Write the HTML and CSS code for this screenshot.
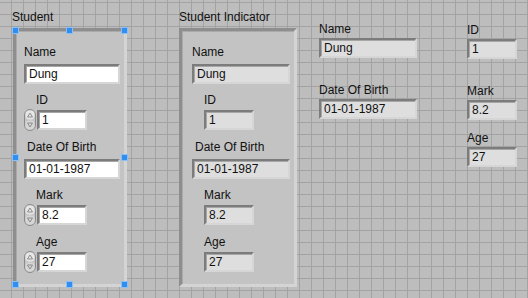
FILE: index.html
```html
<!DOCTYPE html>
<html lang="en">
<head>
  <meta charset="UTF-8">
  <title>Student</title>
  <link rel="stylesheet" href="styles.css">
</head>
<body>
  <div class="panel">
    <div class="col">
      <div class="caption">Student</div>
      <div class="cluster ctl">
        <span class="handle tl"></span>
        <span class="handle tm"></span>
        <span class="handle tr"></span>
        <span class="handle ml"></span>
        <span class="handle mr"></span>
        <span class="handle bl"></span>
        <span class="handle bm"></span>
        <span class="handle br"></span>
        <div class="item">
          <div class="label">Name</div>
          <div class="field str">Dung</div>
        </div>
        <div class="item num">
          <div class="label">ID</div>
          <div class="row">
            <svg class="spin" width="12" height="22" viewBox="0 0 12 22">
              <rect x="0.5" y="0.5" width="11" height="21" rx="5.5" fill="#c6c6c6" stroke="#8a8a8a"/>
              <rect x="1.5" y="1.5" width="9" height="9" rx="4" fill="#e6e6e6"/>
              <rect x="1.5" y="11.5" width="9" height="9" rx="4" fill="#d6d6d6"/>
              <path d="M3.5 8 L6 4 L8.5 8 Z" fill="none" stroke="#8c8c8c"/>
              <path d="M3.5 14 L6 18 L8.5 14 Z" fill="none" stroke="#8c8c8c"/>
            </svg>
            <div class="field n">1</div>
          </div>
        </div>
        <div class="item">
          <div class="label indent">Date Of Birth</div>
          <div class="field str">01-01-1987</div>
        </div>
        <div class="item num">
          <div class="label">Mark</div>
          <div class="row">
            <svg class="spin" width="12" height="22" viewBox="0 0 12 22">
              <rect x="0.5" y="0.5" width="11" height="21" rx="5.5" fill="#c6c6c6" stroke="#8a8a8a"/>
              <rect x="1.5" y="1.5" width="9" height="9" rx="4" fill="#e6e6e6"/>
              <rect x="1.5" y="11.5" width="9" height="9" rx="4" fill="#d6d6d6"/>
              <path d="M3.5 8 L6 4 L8.5 8 Z" fill="none" stroke="#8c8c8c"/>
              <path d="M3.5 14 L6 18 L8.5 14 Z" fill="none" stroke="#8c8c8c"/>
            </svg>
            <div class="field n">8.2</div>
          </div>
        </div>
        <div class="item num">
          <div class="label">Age</div>
          <div class="row">
            <svg class="spin" width="12" height="22" viewBox="0 0 12 22">
              <rect x="0.5" y="0.5" width="11" height="21" rx="5.5" fill="#c6c6c6" stroke="#8a8a8a"/>
              <rect x="1.5" y="1.5" width="9" height="9" rx="4" fill="#e6e6e6"/>
              <rect x="1.5" y="11.5" width="9" height="9" rx="4" fill="#d6d6d6"/>
              <path d="M3.5 8 L6 4 L8.5 8 Z" fill="none" stroke="#8c8c8c"/>
              <path d="M3.5 14 L6 18 L8.5 14 Z" fill="none" stroke="#8c8c8c"/>
            </svg>
            <div class="field n">27</div>
          </div>
        </div>
      </div>
    </div>

    <div class="col">
      <div class="caption">Student Indicator</div>
      <div class="cluster ind">
        <div class="item">
          <div class="label">Name</div>
          <div class="field str">Dung</div>
        </div>
        <div class="item num">
          <div class="label">ID</div>
          <div class="row"><div class="field n">1</div></div>
        </div>
        <div class="item">
          <div class="label indent">Date Of Birth</div>
          <div class="field str">01-01-1987</div>
        </div>
        <div class="item num">
          <div class="label">Mark</div>
          <div class="row"><div class="field n">8.2</div></div>
        </div>
        <div class="item num">
          <div class="label">Age</div>
          <div class="row"><div class="field n">27</div></div>
        </div>
      </div>
    </div>

    <div class="col free first">
      <div class="item">
        <div class="label">Name</div>
        <div class="field str ind">Dung</div>
      </div>
      <div class="item">
        <div class="label">Date Of Birth</div>
        <div class="field str ind">01-01-1987</div>
      </div>
    </div>

    <div class="col free second">
      <div class="item">
        <div class="label">ID</div>
        <div class="field n ind">1</div>
      </div>
      <div class="item">
        <div class="label">Mark</div>
        <div class="field n ind">8.2</div>
      </div>
      <div class="item near">
        <div class="label">Age</div>
        <div class="field n ind">27</div>
      </div>
    </div>
  </div>
</body>
</html>
```

FILE: styles.css
```css
body {
  margin: 0;
  height: 298px;
  overflow: hidden;
  font-family: "Liberation Sans", Arial, sans-serif;
  font-size: 12px;
  color: #111;
  background-color: #bdbdbd;
  background-image: linear-gradient(to right, #a3a3a3 1px, transparent 1px),
                    linear-gradient(to bottom, #a3a3a3 1px, transparent 1px);
  background-size: 12px 12px;
  background-position: 11px 2px;
}
.panel {
  display: grid;
  grid-template-columns: 167px 140px 148px 61px;
  align-items: start;
  padding: 10px 0 0 12px;
}
.caption, .label {
  line-height: 14px;
  white-space: nowrap;
}
.cluster {
  position: relative;
  display: flex;
  flex-direction: column;
  gap: 9px;
  margin-top: 4px;
  padding: 14px 0 11px 8px;
  background: #c3c3c3;
  border: 3px solid;
  border-color: #8e8e8e #d4d4d4 #d4d4d4 #8e8e8e;
  box-shadow: inset 1px 1px 0 #aaaaaa;
}
.cluster.ctl {
  width: 100px;
  margin-left: 1px;
}
.cluster.ind {
  width: 102px;
  padding-left: 10px;
}
.item .label {
  margin-bottom: 5px;
}
.item.num .label {
  margin-bottom: 2px;
  padding-left: 12px;
}
.label.indent {
  padding-left: 3px;
}
.row {
  display: flex;
  align-items: center;
  height: 22px;
}
.cluster.ind .row {
  padding-left: 12px;
}
.spin {
  display: block;
  margin-right: 1px;
}
.field {
  box-sizing: border-box;
  height: 20px;
  padding: 0 3px;
  line-height: 16px;
  white-space: nowrap;
  background: #ffffff;
  border: 2px solid;
  border-color: #7c7c7c #d6d6d6 #d6d6d6 #7c7c7c;
  box-shadow: inset 1px 1px 0 #a6a6a6;
}
.field.str {
  width: 96px;
}
.field.n {
  width: 50px;
}
.cluster.ind .field,
.field.ind {
  background: #dedede;
}
.cluster.ind .field.str,
.field.str.ind {
  width: 98px;
}
.free.first {
  padding-top: 12px;
}
.free.second {
  padding-top: 13px;
}
.free .item .label {
  margin-bottom: 2px;
}
.free .item + .item {
  margin-top: 25px;
}
.free .item.near {
  margin-top: 11px;
}
.handle {
  position: absolute;
  width: 5px;
  height: 5px;
  background: #2f8ef0;
  border: 1px solid #8cc0f4;
}
.handle.tl { top: -4px; left: -4px; }
.handle.tm { top: -4px; left: calc(50% - 4px); }
.handle.tr { top: -4px; right: -4px; }
.handle.ml { top: calc(50% - 4px); left: -4px; }
.handle.mr { top: calc(50% - 4px); right: -4px; }
.handle.bl { bottom: -4px; left: -4px; }
.handle.bm { bottom: -4px; left: calc(50% - 4px); }
.handle.br { bottom: -4px; right: -4px; }
```
